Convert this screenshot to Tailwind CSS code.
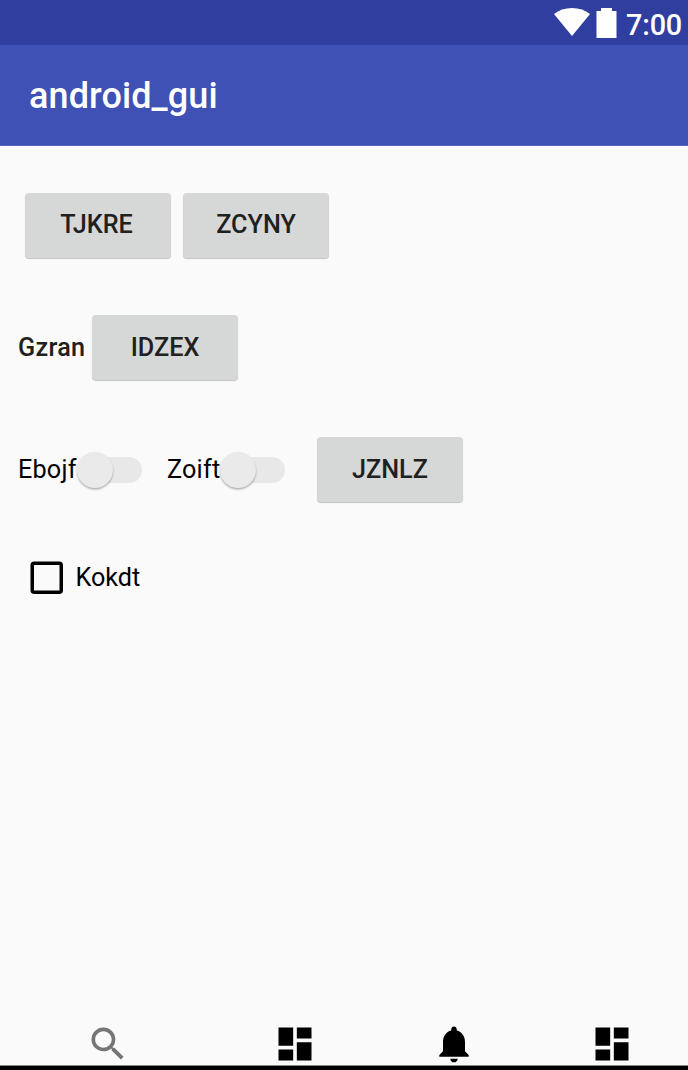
<!DOCTYPE html>
<html lang="en">
<head>
<meta charset="utf-8">
<title>android_gui</title>
<script src="https://cdn.jsdelivr.net/npm/@tailwindcss/browser@4"></script>
</head>
<body class="w-[688px] h-[1070px] overflow-hidden bg-[#fafafa] font-[Roboto,sans-serif] text-[25.2px] leading-[30px] text-black flex flex-col whitespace-nowrap">
  <header class="shrink-0">
    <div class="h-[45px] bg-[#303f9f] flex items-start justify-end pr-[6px] text-white">
      <svg class="mt-[8px] w-[36px] h-[28px]" viewBox="0 0 36 28" fill="#fff"><path d="M18 28 0 6C5 2 11 0 18 0s13 2 18 6z"/></svg>
      <svg class="mt-[8px] ml-[6px] w-[21px] h-[30px]" viewBox="0 0 21 30" fill="#fff"><path d="M5 0h11v3h4.500v27H.5V3H5z"/></svg>
      <span class="ml-[9px] mt-[8px] text-[28.8px] leading-[34px] font-medium tracking-[-0.2px]">7:00</span>
    </div>
    <div class="h-[101px] bg-[#3f51b5] border-b border-[#5364bd] flex items-center pt-[2px] pl-[29px]">
      <h1 class="text-white text-[36px] leading-[42px] font-medium tracking-[0.1px]">android_gui</h1>
    </div>
  </header>

  <main class="flex-1 pt-[47px]">
    <div class="flex h-[66px] pl-[24.500px] gap-[12.500px]">
      <button class="w-[146px] h-[65px] pr-[2px] pb-[1px] rounded-[4px] bg-[#d6d8d7] shadow-[0_1px_1px_rgba(0,0,0,0.22)] font-medium text-[#1f2020]">TJKRE</button>
      <button class="w-[146px] h-[65px] pb-[1px] rounded-[4px] bg-[#d6d8d7] shadow-[0_1px_1px_rgba(0,0,0,0.22)] font-medium text-[#1f2020]">ZCYNY</button>
    </div>
    <div class="flex items-start h-[66px] mt-[56px] pl-[18px]">
      <span class="self-center w-[74px] font-medium tracking-[0.3px] text-[#1f2020]">Gzran</span>
      <button class="w-[146px] h-[65px] rounded-[4px] bg-[#d6d8d7] shadow-[0_1px_1px_rgba(0,0,0,0.22)] font-medium text-[#1f2020]">IDZEX</button>
    </div>
    <div class="flex items-center h-[66px] mt-[56px] pl-[18px]">
      <span class="w-[59px] tracking-[0.200px]">Ebojf</span>
      <span class="w-[65px] h-[26px] rounded-full bg-[#e8e8e8] flex items-center"><span class="size-[36px] shrink-0 rounded-full bg-[#eaeaea] shadow-[0_1.500px_2px_rgba(0,0,0,0.3)]"></span></span>
      <span class="ml-[25px] w-[53px] tracking-[0.200px]">Zoift</span>
      <span class="w-[65px] h-[26px] rounded-full bg-[#e8e8e8] flex items-center"><span class="size-[36px] shrink-0 rounded-full bg-[#eaeaea] shadow-[0_1.500px_2px_rgba(0,0,0,0.3)]"></span></span>
      <button class="self-start ml-[32px] w-[146px] h-[65px] rounded-[4px] bg-[#d6d8d7] shadow-[0_1px_1px_rgba(0,0,0,0.22)] font-medium text-[#1f2020]">JZNLZ</button>
    </div>
    <label class="flex items-center h-[34px] mt-[57px] pl-[30px]">
      <svg class="w-[33px] h-[33px]" viewBox="0 0 33 33" fill="none" stroke="#000" stroke-width="3.500"><rect x="2.250" y="2.250" width="29" height="29" rx="2"/></svg>
      <span class="ml-[12.500px] pt-[2px]">Kokdt</span>
    </label>
  </main>

  <nav class="shrink-0 h-[43px] flex items-start">
    <svg class="ml-[86px] w-[44px] h-[44px]" viewBox="0 0 24 24" fill="#757575"><path d="M15.500 14h-.79l-.28-.27A6.471 6.471 0 0 0 16 9.500 6.500 6.500 0 1 0 9.500 16c1.610 0 3.090-.59 4.230-1.570l.27.28v.79l5 4.990L20.490 19l-4.990-5zm-6 0C7.010 14 5 11.990 5 9.500S7.010 5 9.500 5 14 7.010 14 9.500 11.990 14 9.500 14z"/></svg>
    <svg class="ml-[143px] w-[44px] h-[44px]" viewBox="0 0 24 24"><path d="M3 13h8V3H3v10zm0 8h8v-6H3v6zm10 0h8V11h-8v10zm0-18v6h8V3h-8z"/></svg>
    <svg class="ml-[114.500px] w-[44px] h-[44px]" viewBox="0 0 24 24"><path d="M12 22c1.100 0 2-.9 2-2h-4c0 1.100.89 2 2 2zm6-6v-5c0-3.070-1.640-5.640-4.500-6.320V4c0-.83-.67-1.500-1.500-1.500s-1.500.67-1.500 1.500v.68C7.630 5.360 6 7.920 6 11v5l-2 2v1h16v-1l-2-2z"/></svg>
    <svg class="ml-[114.500px] w-[44px] h-[44px]" viewBox="0 0 24 24"><path d="M3 13h8V3H3v10zm0 8h8v-6H3v6zm10 0h8V11h-8v10zm0-18v6h8V3h-8z"/></svg>
  </nav>
  <footer class="shrink-0 h-[5px] bg-black border-t border-[#858585]"></footer>
</body>
</html>
